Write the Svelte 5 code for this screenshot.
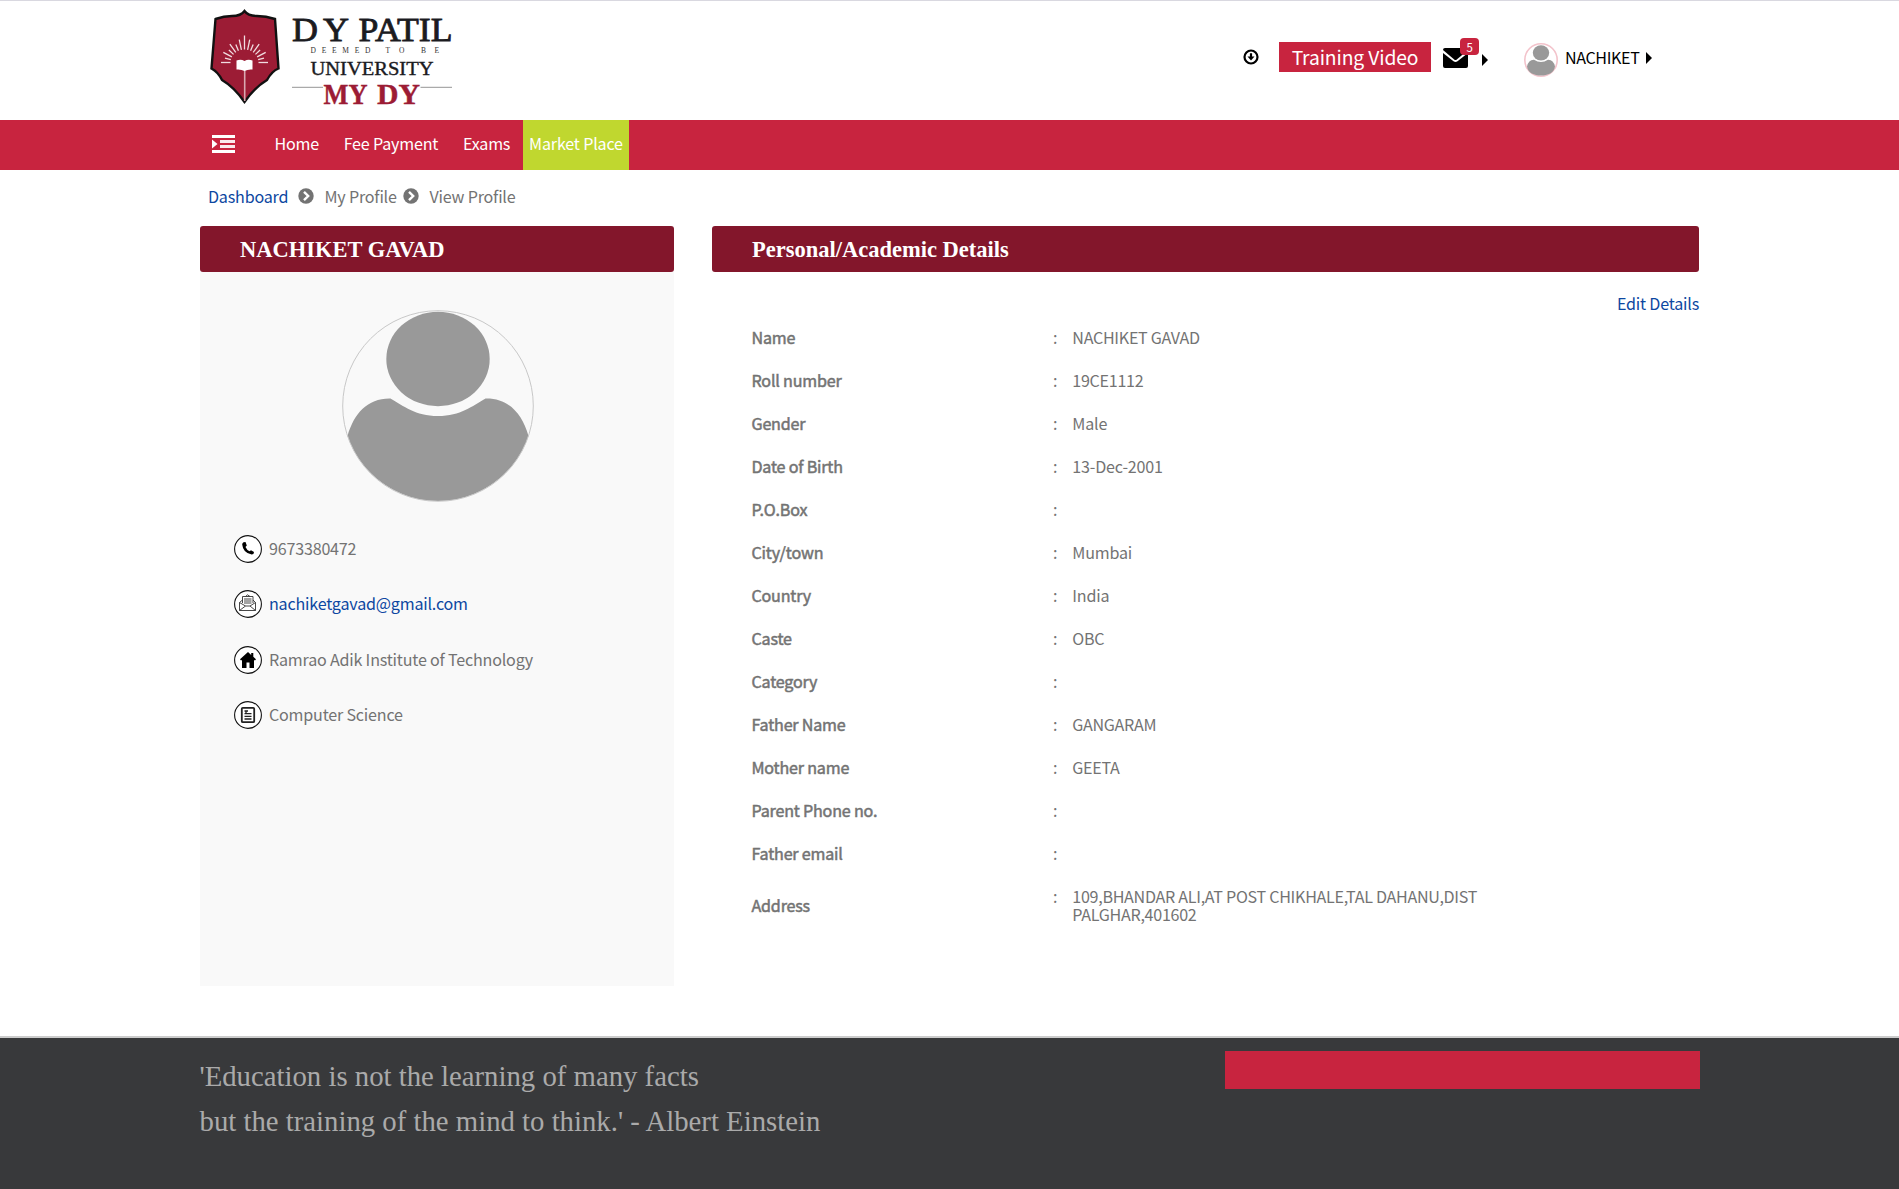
<script>
  const nav = ['Home', 'Fee Payment', 'Exams'];
  const details = [
    ['Name', 'NACHIKET GAVAD'],
    ['Roll number', '19CE1112'],
    ['Gender', 'Male'],
    ['Date of Birth', '13-Dec-2001'],
    ['P.O.Box', ''],
    ['City/town', 'Mumbai'],
    ['Country', 'India'],
    ['Caste', 'OBC'],
    ['Category', ''],
    ['Father Name', 'GANGARAM'],
    ['Mother name', 'GEETA'],
    ['Parent Phone no.', ''],
    ['Father email', ''],
    ['Address', '109,BHANDAR ALI,AT POST CHIKHALE,TAL DAHANU,DIST PALGHAR,401602']
  ];
  // Sun rays of the crest: inner and outer end of each line
  const rays = Array.from({ length: 15 }, (_, i) => {
    const a = (Math.PI * i) / 14;
    const outer = i === 7 ? 27 : i % 2 ? 20 : 23.5;
    return {
      x1: 41.5 - Math.cos(a) * 14, y1: 62.5 - Math.sin(a) * 13,
      x2: 41.5 - Math.cos(a) * outer, y2: 62.5 - Math.sin(a) * outer
    };
  });
</script>

{#snippet person()}
  <ellipse cx="96" cy="49" rx="51.7" ry="47.2" />
  <path d="M5.5 126 C12 103 26 88 48.500 88.500 C62 96 73 106 96 106 C119 106 130 96 143.500 88.500 C166 88 180 103 186.500 126 A95.500 95.500 0 0 1 5.500 126 Z" />
{/snippet}

<div class="page">
  <header>
    <svg class="logo" width="270" height="110" viewBox="0 0 270 110">
      <path d="M41.500 8 Q38 13 29 13 Q21 13 12.500 16 L8.500 65.500 Q15 69 19 77 Q31 84 41.500 99 Q52 84 64 77 Q69 68 75.500 65.500 L72 16 Q63 13 54 13 Q45 13 41.500 8Z" fill="#9c1c35" stroke="#111" stroke-width="2.4" transform="translate(3 3)" />
      <g stroke="#f1dce0" stroke-width="1.300" transform="translate(3 0)">
        {#each rays as r}<line x1={r.x1} y1={r.y1} x2={r.x2} y2={r.y2} />{/each}
      </g>
      <path d="M44.700 68 V101" stroke="#d9a8b1" stroke-width="1.600" />
      <path d="M36.500 60.500 Q41 59 44.500 61 Q48 59 52.500 60.500 V69.500 Q48 69 44.500 71 Q41 69 36.500 69.500Z" fill="#fff" />
      <g class="logo-text">
        <g font-size="33" stroke-width=".8">
          <text x="92" y="40.700" textLength="26" lengthAdjust="spacingAndGlyphs">D</text>
          <text x="123" y="40.700" textLength="26" lengthAdjust="spacingAndGlyphs">Y</text>
          <text x="158.500" y="40.700" textLength="94" lengthAdjust="spacingAndGlyphs">PATIL</text>
        </g>
        <g class="deemed" font-size="7.500">
          <text x="110.500" y="53.300" textLength="60">DEEMED</text>
          <text x="185.500" y="53.300" textLength="19">TO</text>
          <text x="221" y="53.300" textLength="18">BE</text>
        </g>
        <text x="110.500" y="74.700" font-size="19" textLength="123" lengthAdjust="spacingAndGlyphs">UNIVERSITY</text>
        <g class="mydy" font-size="30">
          <text x="123.500" y="103.700" textLength="44" lengthAdjust="spacingAndGlyphs">MY</text>
          <text x="177" y="103.700" textLength="43" lengthAdjust="spacingAndGlyphs">DY</text>
        </g>
      </g>
      <path d="M92 87.300H123M220.500 87.300H252" stroke="#aaa" stroke-width="1.300" />
    </svg>

    <div class="tools">
      <svg class="down" width="16" height="16" viewBox="0 0 16 16"><circle cx="8" cy="8" r="6.500" fill="none" stroke="#000" stroke-width="2.200" /><path d="M6.900 4.300H9.100V7.500H11.500L8 11.500 4.500 7.500H6.900Z" /></svg>
      <span class="training">Training Video</span>
      <span class="mail">
        <svg width="25" height="20" viewBox="0 0 25 20"><path d="M2 0H23Q25 0 25 2L13.800 11.500Q12.500 12.500 11.200 11.500L0 2Q0 0 2 0Z" /><path d="M0 5 10.500 13.300Q12.500 14.600 14.500 13.300L25 5V18Q25 20 23 20H2Q0 20 0 18Z" /></svg>
        <span class="badge">5</span>
      </span>
      <svg class="arrow first" width="6" height="12" viewBox="0 0 6 12"><path d="M0 0 6 6 0 12Z" /></svg>
      <svg class="mini" width="36" height="36" viewBox="0 0 36 36">
        <circle class="halo" cx="18" cy="18" r="16.200" />
        <g class="grey"><ellipse cx="18" cy="10.800" rx="8.200" ry="7.600" /><path d="M4 24.500Q5.500 17.500 11 17.700Q18 22.500 25 17.700Q30.500 17.500 32 24.500C31 31 25 33.500 18 33.500S5 31 4 24.500Z" /></g>
      </svg>
      <span class="user">NACHIKET</span>
      <svg class="arrow" width="6" height="12" viewBox="0 0 6 12"><path d="M0 0 6 6 0 12Z" /></svg>
    </div>
  </header>

  <nav>
    <svg class="menu" width="23" height="18" viewBox="0 0 23 18"><path d="M0 0H23V3H0ZM0 15H23V18H0ZM0 4.500 5.500 9 0 13.500Z" /><path class="soft" d="M8 5H23V8H8ZM8 10H23V13H8Z" /></svg>
    {#each nav as item}<a href="#top">{item}</a>{/each}
    <a class="market" href="#top">Market Place</a>
  </nav>

  <div class="crumbs">
    <a class="c1" href="#top">Dashboard</a>
    <svg width="16" height="16" viewBox="0 0 16 16"><circle cx="8" cy="8" r="7.700" /><path d="M6 3.800 10.200 8 6 12.200" /></svg>
    <span class="c2">My Profile</span>
    <svg width="16" height="16" viewBox="0 0 16 16"><circle cx="8" cy="8" r="7.700" /><path d="M6 3.800 10.200 8 6 12.200" /></svg>
    <span class="c3">View Profile</span>
  </div>

  <main>
    <section class="profile">
      <h2>NACHIKET GAVAD</h2>
      <svg class="avatar" width="192" height="192" viewBox="0 0 192 192">
        <g class="grey">{@render person()}</g>
        <circle cx="96" cy="96" r="95.300" fill="none" stroke="#c8c8c8" stroke-width="1" />
      </svg>
      <ul>
        <li>
          <svg width="28" height="28" viewBox="0 0 28 28"><circle class="ring" cx="14" cy="14" r="13.400" /><path d="M9.500 7.200 11.500 7 12.800 10.500 11.500 12Q12.800 15 15.500 16.300L17 15.300 20 16.900Q20 19.500 17.700 19.500Q9 18 8.200 9.500Q8.200 8 9.500 7.200Z" /></svg>
          <span>9673380472</span>
        </li>
        <li>
          <svg width="28" height="28" viewBox="0 0 28 28"><circle class="ring" cx="14" cy="14" r="13.400" /><path class="thin" d="M8.500 13V6.500H19V13M11.500 6.500 13.500 4.800 16 6.500M10 9H17.500M10 11H17.500M10 13H17.500M8.500 10 5.500 12.500V20.500H21.500V12.500L19 10M5.500 12.500 11.500 16H16L21.500 12.500M5.500 20.500 11.500 16M21.500 20.500 16 16" /></svg>
          <a href="#top">nachiketgavad@gmail.com</a>
        </li>
        <li>
          <svg width="28" height="28" viewBox="0 0 28 28"><circle class="ring" cx="14" cy="14" r="13.400" /><path d="M14 6 17.200 9V7H19.300V10.800L22 13.300 21 14.500 20 14V22H15.500V16.500H12.500V22H8V14L7 14.500 6 13.300Z" /></svg>
          <span>Ramrao Adik Institute of Technology</span>
        </li>
        <li>
          <svg width="28" height="28" viewBox="0 0 28 28"><circle class="ring" cx="14" cy="14" r="13.400" /><rect class="doc" x="7.800" y="6.800" width="12.400" height="14.400" rx="1" /><path class="lines" d="M10.500 10H14M10.500 12.700H17.500M10.500 15.300H17.500M10.500 18H17.500M12 10V12" /></svg>
          <span>Computer Science</span>
        </li>
      </ul>
    </section>

    <section class="academic">
      <h2>Personal/Academic Details</h2>
      <a class="edit" href="#top">Edit Details</a>
      <dl>
        {#each details as [label, value]}
          <div class="row">
            <dt>{label}</dt>
            <dd class="colon">:</dd>
            <dd class="value" class:caps={value && value === value.toUpperCase()}>{value}</dd>
          </div>
        {/each}
      </dl>
    </section>
  </main>

  <footer>
    <p>'Education is not the learning of many facts<br />but the training of the mind to think.' - Albert Einstein</p>
    <div class="bar"></div>
  </footer>
</div>

<style>
  :global(body) { margin: 0; background: #fff; }
  .page {
    width: 1899px; height: 1189px; overflow: hidden; box-sizing: border-box;
    display: flex; flex-direction: column;
    font: 16.1px/20px "Noto Sans CJK SC", "Open Sans", sans-serif; color: #737373;
    letter-spacing: -.2px;
  }
  a { color: #0d47a1; text-decoration: none; }
  span, a { white-space: nowrap; }
  svg { display: block; flex: none; }
  .grey { fill: #999; }

  header { height: 120px; box-sizing: border-box; border-top: 1px solid #d9d8e0; padding-left: 200px; display: flex; flex: none; }
  .logo { margin-top: -1px; width: 270px; letter-spacing: 0; }
  .logo-text { font-family: "Liberation Serif", serif; fill: #1b1b1f; stroke: #1b1b1f; stroke-width: .4; }
  .logo-text .deemed { fill: #333; stroke: none; }
  .logo-text .mydy { fill: #9c1c35; stroke: #9c1c35; font-weight: bold; }
  .tools { display: flex; margin-left: 772.500px; color: #000; }
  .down { margin-top: 48px; }
  .training { box-sizing: border-box; width: 152px; height: 30px; margin: 41px 0 0 20.500px; text-align: center; background: #c8243f; color: #fff; font-size: 19.3px; line-height: 31px; letter-spacing: -.12px; }
  .mail { position: relative; margin: 47px 0 0 12px; width: 25px; height: 20px; }
  .badge { position: absolute; left: 17px; top: -10px; width: 19px; height: 17px; border-radius: 4px; background: #c8243f; color: #fff; font-size: 11.500px; line-height: 18px; text-align: center; }
  .arrow { margin-top: 51px; }
  .arrow.first { margin: 53px 0 0 14px; }
  .mini { margin: 41px 0 0 35px; }
  .halo { fill: #fff; stroke: #f3c3cb; stroke-width: 1.6; }
  .user { margin: 46px 7px 0 6px; width: 74px; letter-spacing: -.38px; }

  nav { height: 50px; flex: none; background: #c8243f; padding-left: 212px; display: flex; line-height: 46px; }
  nav a { color: #fff; padding: 0 12.4px; }
  .menu { fill: #fff; margin: 15px 27px 0 0; }
  .menu .soft { opacity: .9; }
  nav .market { background: #c0d72f; padding: 0 6px 0 6.500px; width: 93.500px; letter-spacing: -.18px; }

  .crumbs { height: 56px; flex: none; box-sizing: border-box; padding: 16px 0 0 208px; display: flex; }
  .crumbs svg { fill: #737373; margin-top: 2px; }
  .crumbs svg path { fill: none; stroke: #fff; stroke-width: 2.4; }
  .c1 { width: 90px; }
  .c2 { margin-left: 10.500px; width: 78px; }
  .c3 { margin-left: 11px; }

  main { height: 810px; flex: none; padding-left: 200px; display: flex; gap: 38px; }
  h2 { margin: 0; height: 46px; border-radius: 3px; background: #83162b; color: #fff; font: bold 22.500px/47px "Liberation Serif", serif; padding-left: 40px; letter-spacing: 0; }
  .profile { width: 474px; height: 760px; background: #f9f9f9; }
  .avatar { margin: 38px 0 0 142px; }
  ul { list-style: none; margin: 33px 0 0; padding: 0 0 0 34px; display: grid; grid-template-rows: 55px 56px 55px 28px; }
  li { display: flex; align-items: flex-start; gap: 7px; }
  li span, li a { line-height: 26px; }
  .ring { fill: #fff; stroke: #111; stroke-width: 1.100; }
  .thin { fill: none; stroke: #333; stroke-width: .9; }
  .doc { fill: none; stroke: #222; stroke-width: 1.800; }
  .lines { fill: none; stroke: #222; stroke-width: 1.300; }

  .academic { width: 987px; display: flex; flex-direction: column; }
  .edit { align-self: flex-end; margin-top: 21px; }
  dl { margin: 14px 0 0 39.500px; }
  .row { display: grid; grid-template-columns: 301.500px 19.300px 420px; height: 43px; line-height: 20px; }
  dt { -webkit-text-stroke: .5px #737373; }
  dd { margin: 0; }
  .value { line-height: 18px; padding-top: 1px; }
  .caps { letter-spacing: -.29px; }
  .row:last-child dt { padding-top: 9px; }

  footer { flex: 1; border-top: 2px solid #ccc; background: #38393b; padding: 0 199px 0 200px; display: flex; justify-content: space-between; }
  footer p { margin: 16px 0 0 -.5px; font: 28.750px/45px "Liberation Serif", serif; color: #aaa; letter-spacing: 0; }
  .bar { width: 475px; height: 38px; margin-top: 13px; background: #c8243f; }
</style>
